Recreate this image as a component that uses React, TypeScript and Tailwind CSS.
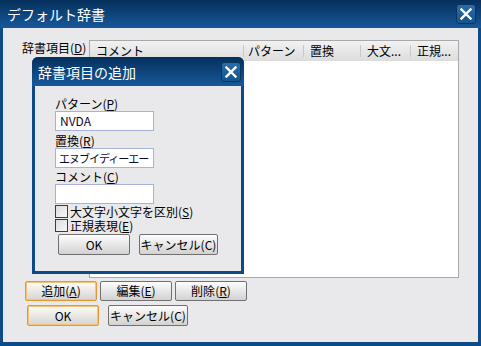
const font = { fontFamily: '"Noto Sans CJK JP", "Noto Sans", sans-serif' };

const CloseButton = () => (
  <div className="flex h-[20px] w-[20px] items-center justify-center rounded-[3px] border border-[#0a3563] bg-gradient-to-b from-[#2a6dab] to-[#15558f]">
    <svg width="12" height="12" viewBox="0 0 12 12">
      <path d="M1.5 1.5 L10.5 10.5 M10.5 1.5 L1.5 10.5" stroke="white" strokeWidth="2.4" strokeLinecap="square" />
    </svg>
  </div>
);

const Button = ({
  children,
  w,
  primary = false,
  h = "h-[20px]",
}: {
  children: React.ReactNode;
  w: string;
  primary?: boolean;
  h?: string;
}) => (
  <div
    className={`${w} ${h} flex items-center justify-center whitespace-nowrap rounded-[2px] border text-[12px] leading-none text-black ${
      primary
        ? "border-[#e8962e] bg-gradient-to-b from-[#fffdf5] to-[#d4d4d4] shadow-[inset_0_0_0_1px_#f7c27a]"
        : "border-[#707070] bg-gradient-to-b from-[#fdfdfd] to-[#d2d2d2]"
    }`}
  >
    {children}
  </div>
);

const Key = ({ k }: { k: string }) => (
  <>
    (<span className="underline underline-offset-1">{k}</span>)
  </>
);

const Checkbox = ({ label }: { label: React.ReactNode }) => (
  <div className="flex h-[13px] items-center gap-[2px] whitespace-nowrap text-[12px] leading-[12px]">
    <div className="h-[13px] w-[13px] border border-[#1e3f74] bg-gradient-to-br from-[#dcdcdc] to-[#f6f6f6]" />
    <span>{label}</span>
  </div>
);

export default function App() {
  return (
    <div style={font} className="relative flex h-[346px] w-[481px] flex-col overflow-hidden bg-[#0e4a85] text-black">
      {/* title bar */}
      <div className="flex h-[28px] items-center justify-between bg-gradient-to-b from-[#06305c] to-[#17599a] pl-[7px] pr-[5px]">
        <span className="text-[14px] leading-none text-white">デフォルト辞書</span>
        <CloseButton />
      </div>

      {/* body */}
      <div className="mx-[3px] mb-[4px] flex flex-1 flex-col bg-[#e9e9eb] pl-[19px] pt-[12px]">
        <div className="flex">
          <div className="w-[67px] whitespace-nowrap pt-[1px] text-[12px] leading-[14px]">
            辞書項目<Key k="D" />
          </div>
          <div className="flex h-[238px] w-[370px] flex-col border border-[#a9a9a9] bg-white">
            <div className="flex h-[20px] items-center whitespace-nowrap bg-gradient-to-b from-[#f2f2f2] to-[#dcdcdc] text-[12px] leading-none">
              <div className="w-[153px] pl-[6px]">コメント</div>
              <div className="w-[60px] border-l border-[#c8c8c8] pl-[4px]">パターン</div>
              <div className="w-[57px] border-l border-[#c8c8c8] pl-[6px]">置換</div>
              <div className="w-[50px] border-l border-[#c8c8c8] pl-[6px]">大文...</div>
              <div className="w-[48px] border-l border-[#c8c8c8] pl-[6px]">正規...</div>
            </div>
          </div>
        </div>

        <div className="mt-[3px] flex gap-[3px] pl-[3px]">
          <Button w="w-[72px]" primary>
            追加<Key k="A" />
          </Button>
          <Button w="w-[72px]">
            編集<Key k="E" />
          </Button>
          <Button w="w-[72px]">
            削除<Key k="R" />
          </Button>
        </div>
        <div className="mt-[4px] flex gap-[9px] pl-[5px]">
          <Button w="w-[72px]" h="h-[21px]" primary>
            OK
          </Button>
          <Button w="w-[80px]" h="h-[21px]">
            キャンセル(C)
          </Button>
        </div>
      </div>

      {/* add entry dialog (overlay) */}
      <div className="absolute left-[32px] top-[57px] flex h-[217px] w-[212px] flex-col rounded-t-[6px] bg-[#0e4a85]">
        <div className="flex h-[29px] items-center justify-between rounded-t-[6px] bg-gradient-to-b from-[#06305c] to-[#17599a] pl-[6px] pr-[3px]">
          <span className="text-[14px] leading-none text-white">辞書項目の追加</span>
          <CloseButton />
        </div>
        <div className="mx-[3px] mb-[3px] flex flex-1 flex-col bg-[#e9e9eb] pl-[20px] pt-[11px] text-[12px]">
          <div className="leading-[14px]">
            パターン<Key k="P" />
          </div>
          <div className="flex h-[20px] w-[99px] items-center border border-[#a7b1d9] bg-white pl-[4px] text-[12px] leading-none text-[#0a0a30]">
            NVDA
          </div>
          <div className="mt-[3px] leading-[14px]">
            置換<Key k="R" />
          </div>
          <div className="flex h-[20px] w-[99px] items-center overflow-hidden whitespace-nowrap border border-[#a7b1d9] bg-white pl-[3px] text-[11px] leading-none tracking-[-1px] text-[#0a0a30]">
            エヌブイディーエー
          </div>
          <div className="mt-[2px] leading-[14px]">
            コメント<Key k="C" />
          </div>
          <div className="h-[20px] w-[99px] border border-[#a7b1d9] bg-white" />
          <div className="mt-[1px] flex flex-col gap-[1px]">
            <Checkbox label={<>大文字小文字を区別<Key k="S" /></>} />
            <Checkbox label={<>正規表現<Key k="E" /></>} />
          </div>
          <div className="mt-[2px] flex gap-[9px] pl-[3px]">
            <Button w="w-[72px]" h="h-[21px]">
              OK
            </Button>
            <Button w="w-[79px]" h="h-[21px]">
              キャンセル(C)
            </Button>
          </div>
        </div>
      </div>
    </div>
  );
}
